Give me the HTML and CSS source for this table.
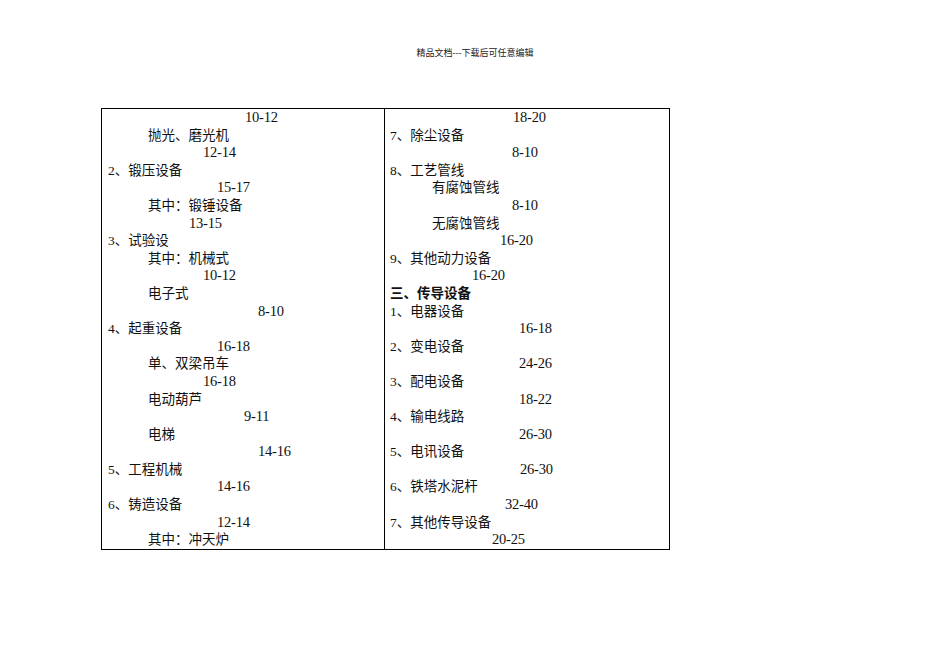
FILE: index.html
```html
<!DOCTYPE html>
<html lang="zh-CN">
<head>
<meta charset="utf-8">
<title>精品文档</title>
<link rel="stylesheet" href="styles.css">
</head>
<body>
<div class="banner">精品文档---下载后可任意编辑</div>
<div class="sheet">
  <div class="col col-left">
    <div class="ln num t137">10-12</div>
    <div class="ln t40">抛光、磨光机</div>
    <div class="ln num t95">12-14</div>
    <div class="ln">2、锻压设备</div>
    <div class="ln num t109">15-17</div>
    <div class="ln t40">其中：锻锤设备</div>
    <div class="ln num t81">13-15</div>
    <div class="ln">3、试验设</div>
    <div class="ln t40">其中：机械式</div>
    <div class="ln num t95">10-12</div>
    <div class="ln t40">电子式</div>
    <div class="ln num t150">8-10</div>
    <div class="ln">4、起重设备</div>
    <div class="ln num t109">16-18</div>
    <div class="ln t40">单、双梁吊车</div>
    <div class="ln num t95">16-18</div>
    <div class="ln t40">电动葫芦</div>
    <div class="ln num t136">9-11</div>
    <div class="ln t40">电梯</div>
    <div class="ln num t150">14-16</div>
    <div class="ln">5、工程机械</div>
    <div class="ln num t109">14-16</div>
    <div class="ln">6、铸造设备</div>
    <div class="ln num t109">12-14</div>
    <div class="ln t40">其中：冲天炉</div>
  </div>
  <div class="col col-right">
    <div class="ln num r123">18-20</div>
    <div class="ln">7、除尘设备</div>
    <div class="ln num r122">8-10</div>
    <div class="ln">8、工艺管线</div>
    <div class="ln r42">有腐蚀管线</div>
    <div class="ln num r122">8-10</div>
    <div class="ln r42">无腐蚀管线</div>
    <div class="ln num r110">16-20</div>
    <div class="ln">9、其他动力设备</div>
    <div class="ln num r82">16-20</div>
    <div class="ln head">三、传导设备</div>
    <div class="ln">1、电器设备</div>
    <div class="ln num r129">16-18</div>
    <div class="ln">2、变电设备</div>
    <div class="ln num r129">24-26</div>
    <div class="ln">3、配电设备</div>
    <div class="ln num r129">18-22</div>
    <div class="ln">4、输电线路</div>
    <div class="ln num r129">26-30</div>
    <div class="ln">5、电讯设备</div>
    <div class="ln num r130">26-30</div>
    <div class="ln">6、铁塔水泥杆</div>
    <div class="ln num r115">32-40</div>
    <div class="ln">7、其他传导设备</div>
    <div class="ln num r102">20-25</div>
  </div>
</div>
</body>
</html>
```

FILE: styles.css
```css
html, body {
  margin: 0;
  padding: 0;
  background: #fff;
}

body {
  font-family: "Liberation Serif", "Noto Sans CJK SC", serif;
  color: #111;
}

.banner {
  padding-top: 46px;
  height: 14px;
  line-height: 14px;
  font-size: 9px;
  text-align: center;
  color: #222;
}

.sheet {
  margin-top: 48px;
  margin-left: 101px;
  width: 567px;
  display: grid;
  grid-template-columns: 283px 284px;
  border: 1px solid #000;
}

.col {
  font-size: 13.5px;
  line-height: 17.6px;
  white-space: nowrap;
}

.col-left {
  border-right: 1px solid #000;
  padding-left: 6px;
}

.col-right {
  padding-left: 5px;
}

.ln {
  height: 17.6px;
}

.num {
  font-size: 14.5px;
  letter-spacing: -0.2px;
}

.head {
  font-weight: bold;
}

.t40 { padding-left: 40px; }
.t81 { padding-left: 81px; }
.t95 { padding-left: 95px; }
.t109 { padding-left: 109px; }
.t136 { padding-left: 136px; }
.t137 { padding-left: 137px; }
.t150 { padding-left: 150px; }

.r42 { padding-left: 42px; }
.r82 { padding-left: 82px; }
.r102 { padding-left: 102px; }
.r110 { padding-left: 110px; }
.r115 { padding-left: 115px; }
.r122 { padding-left: 122px; }
.r123 { padding-left: 123px; }
.r129 { padding-left: 129px; }
.r130 { padding-left: 130px; }
```
